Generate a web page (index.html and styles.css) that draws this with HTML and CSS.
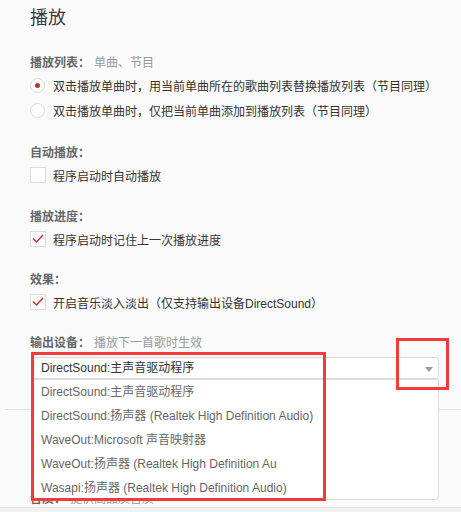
FILE: index.html
```html
<!DOCTYPE html>
<html lang="zh-CN">
<head>
<meta charset="utf-8">
<title>播放设置</title>
<link rel="stylesheet" href="styles.css">
</head>
<body>
<div class="main">
  <div class="content">
    <h1 class="title">播放</h1>

    <section class="group first">
      <div class="label">播放列表：<span class="hint">单曲、节目</span></div>
      <div class="row radio-row"><span class="radio checked"></span><span>双击播放单曲时，用当前单曲所在的歌曲列表替换播放列表（节目同理）</span></div>
      <div class="row radio-row"><span class="radio"></span><span>双击播放单曲时，仅把当前单曲添加到播放列表（节目同理）</span></div>
    </section>

    <section class="group">
      <div class="label">自动播放：</div>
      <div class="row"><span class="check"></span><span>程序启动时自动播放</span></div>
    </section>

    <section class="group">
      <div class="label">播放进度：</div>
      <div class="row"><span class="check"><svg viewBox="0 0 16 16" width="16" height="16"><polyline points="3,7.5 6.5,11 13,4" fill="none" stroke="#c62f2f" stroke-width="1.5"/></svg></span><span>程序启动时记住上一次播放进度</span></div>
    </section>

    <section class="group tight">
      <div class="label">效果：</div>
      <div class="row"><span class="check"><svg viewBox="0 0 16 16" width="16" height="16"><polyline points="3,7.5 6.5,11 13,4" fill="none" stroke="#c62f2f" stroke-width="1.5"/></svg></span><span>开启音乐淡入淡出（仅支持输出设备DirectSound）</span></div>
    </section>

    <section class="group tight">
      <div class="label">输出设备：<span class="hint">播放下一首歌时生效</span></div>
      <div class="select">
        <span class="select-value">DirectSound:主声音驱动程序</span>
        <span class="arrow"></span>
        <ul class="dropdown">
          <li>DirectSound:主声音驱动程序</li>
          <li>DirectSound:扬声器 (Realtek High Definition Audio)</li>
          <li>WaveOut:Microsoft 声音映射器</li>
          <li>WaveOut:扬声器 (Realtek High Definition Au</li>
          <li>Wasapi:扬声器 (Realtek High Definition Audio)</li>
        </ul>
      </div>
    </section>
  </div>
  <div class="divider"></div>
  <div class="content">
    <div class="label hidden-label">音质：<span class="hint">提供高品质音质</span></div>
  </div>
</div>
<div class="footer"></div>

<div class="mark mark-list"></div>
<div class="mark mark-arrow"></div>
</body>
</html>
```

FILE: styles.css
```css
html, body {
  margin: 0;
  padding: 0;
  background: #fafafa;
  height: 100%;
  overflow: hidden;
}
body {
  font-family: "Liberation Sans", "Noto Sans CJK SC", sans-serif;
  font-size: 12px;
  color: #333;
  position: relative;
}
.main {
  padding: 6px 0 0 5px;
}
.content {
  padding-left: 25px;
}
.title {
  margin: 0;
  font-size: 18px;
  font-weight: normal;
  line-height: 24px;
  color: #3a3a3a;
}
.group {
  margin-top: 20px;
}
.group.first {
  margin-top: 23px;
}
.group.tight {
  margin-top: 19px;
}
.label {
  line-height: 20px;
  height: 20px;
  font-weight: bold;
  color: #666;
}
.hint {
  font-weight: normal;
  color: #999;
  margin-left: 4px;
}
.row {
  display: flex;
  align-items: center;
  height: 24px;
  gap: 7px;
  color: #333;
}
.radio-row {
  height: 25px;
}
.radio {
  box-sizing: border-box;
  width: 15px;
  height: 15px;
  margin-right: 1px;
  border: 1px solid #dcdcdc;
  border-radius: 50%;
  background: #fdfdfd;
  display: flex;
  align-items: center;
  justify-content: center;
  flex: none;
}
.radio.checked::after {
  content: "";
  width: 5px;
  height: 5px;
  border-radius: 50%;
  background: #c62f2f;
}
.check {
  box-sizing: border-box;
  width: 16px;
  height: 16px;
  border: 1px solid #dcdcdc;
  background: #fdfdfd;
  flex: none;
  position: relative;
}
.check svg {
  position: absolute;
  left: -1px;
  top: -1px;
}
.select {
  position: relative;
  box-sizing: border-box;
  margin: 4px 0 0 2px;
  width: 407px;
  height: 22px;
  border: 1px solid #dcdcdc;
  border-radius: 3px;
  background: #fff;
  padding-left: 8px;
  line-height: 20px;
  color: #333;
}
.arrow {
  position: absolute;
  right: 5px;
  top: 9px;
  width: 0;
  height: 0;
  border-left: 4.5px solid transparent;
  border-right: 4.5px solid transparent;
  border-top: 5px solid #999;
}
.dropdown {
  position: absolute;
  left: -1px;
  right: -1px;
  top: 21px;
  margin: 0;
  padding: 0;
  list-style: none;
  box-sizing: border-box;
  height: 121px;
  background: #fff;
  border: 1px solid #dcdcdc;
  border-radius: 0 0 3px 3px;
  z-index: 2;
}
.dropdown li {
  height: 24px;
  line-height: 24px;
  padding-left: 8px;
  color: #666;
  white-space: nowrap;
}
.divider {
  margin-top: 30px;
  height: 1px;
  background: #e3e3e3;
}
.hidden-label {
  margin-top: 81px;
  height: 16px;
  line-height: 16px;
}
.footer {
  border-top: 1px solid #e3e3e3;
  background: #f2f2f2;
  height: 20px;
}
.mark {
  position: absolute;
  box-sizing: border-box;
  border: 3px solid #f23b3b;
  z-index: 5;
}
.mark-list {
  left: 31px;
  top: 352px;
  width: 295px;
  height: 149px;
}
.mark-arrow {
  left: 396px;
  top: 338px;
  width: 53px;
  height: 52px;
}
```
